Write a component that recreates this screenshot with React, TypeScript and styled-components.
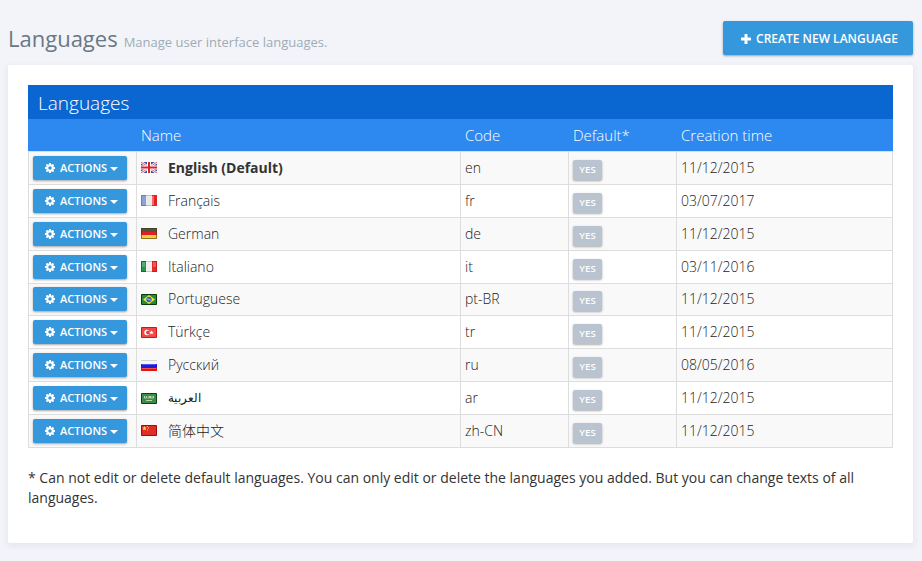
import React from "react";
import styled, { createGlobalStyle } from "styled-components";

const GlobalStyle = createGlobalStyle`
  * { box-sizing: border-box; }
  body {
    margin: 0;
    background: #f3f4f9;
    color: #333;
    font: 400 14px/20px "Open Sans", "Noto Sans CJK SC", sans-serif;
  }
`;

const Page = styled.main`
  width: 922px;
  height: 561px;
  padding: 21px 9px 0 8px;
  overflow: hidden;
`;

const PageHead = styled.header`
  display: flex;
  justify-content: space-between;
  height: 44px;
`;

const Title = styled.h1`
  margin: 0;
  font-size: 22px;
  line-height: 34px;
  font-weight: 400;
  color: #697882;
  white-space: nowrap;
`;

const Subtitle = styled.small`
  margin-left: 6px;
  font-size: 13px;
  color: #9eacb4;
`;

const Button = styled.button<{ $small?: boolean }>`
  display: flex;
  align-items: center;
  justify-content: center;
  width: ${(p) => (p.$small ? 94 : 190)}px;
  height: ${(p) => (p.$small ? 24 : 34)}px;
  padding: ${(p) => (p.$small ? "0 0 0 3px" : "1px 0 0 3px")};
  border: 0;
  border-radius: 2px;
  background: #3598dc;
  color: #fff;
  font: 600 ${(p) => (p.$small ? "11px" : "12px")} / 18px "Open Sans", sans-serif;
  text-transform: uppercase;
  white-space: nowrap;
  box-shadow: 0 1px 3px rgba(0, 0, 0, 0.15), 0 1px 2px rgba(0, 0, 0, 0.22);
`;

const Icon = styled.svg<{ $gap: number }>`
  flex: none;
  margin-right: ${(p) => p.$gap}px;
  fill: #fff;
`;

const Caret = styled.span`
  margin-left: 3px;
  margin-top: 2px;
  border: 4px solid transparent;
  border-top-color: #fff;
  border-bottom: 0;
`;

const Card = styled.section`
  height: 478px;
  padding: 20px;
  border-radius: 2px;
  background: #fff;
  box-shadow: 0 2px 6px 1px rgba(60, 70, 110, 0.08);
`;

const TableTitle = styled.h2`
  margin: 0;
  height: 34px;
  padding-left: 10px;
  background: #0a66d0;
  color: #fff;
  font-size: 19px;
  line-height: 36px;
  font-weight: 300;
`;

const Columns = styled.div`
  display: grid;
  grid-template-columns: 108px 324px 108px 108px 217px;
`;

const HeaderRow = styled(Columns)`
  height: 32px;
  background: #2d89f0;
  color: #fff;
  font-size: 15px;
  font-weight: 300;
  line-height: 33px;
`;

const HeaderCell = styled.div`
  padding-left: 5px;
`;

const Body = styled.div`
  border-top: 1px solid #ddd;
`;

const Row = styled(Columns)`
  height: 32.89px;
  border-right: 1px solid #ddd;
  border-bottom: 1px solid #ddd;
  background: #fff;
  &:nth-child(odd) {
    background: #f9f9f9;
  }
`;

const Cell = styled.div<{ $bold?: boolean }>`
  display: flex;
  align-items: center;
  padding-left: 4px;
  border-left: 1px solid #ddd;
  color: ${(p) => (p.$bold ? "#333" : "#1c1c1c")};
  font-weight: ${(p) => (p.$bold ? 700 : 300)};
`;

const Flag = styled.svg`
  flex: none;
  width: 16px;
  height: 11px;
  margin-right: 11px;
`;

const Badge = styled.span`
  width: 29px;
  height: 20px;
  margin-top: 4px;
  border-radius: 2px;
  background: #bac3d0;
  color: #fff;
  font-size: 9.6px;
  line-height: 19px;
  font-weight: 600;
  text-align: center;
  box-shadow: 0 1px 3px rgba(0, 0, 0, 0.15), 0 1px 2px rgba(0, 0, 0, 0.2);
`;

const Note = styled.p`
  margin: 20px 0 0;
`;

const flagArt: Record<string, React.ReactNode> = {
  en: (
    <>
      <path fill="#3b4f9e" d="M0 0h16v11H0z" />
      <path stroke="#f2f2f8" strokeWidth="2.6" d="m0 0 16 11M16 0 0 11" />
      <path stroke="#e0555f" strokeWidth=".9" d="m0 0 16 11M16 0 0 11" />
      <path fill="#fff" d="M6 0h4v11H6zM0 3.500h16v4H0z" />
      <path fill="#d8232f" d="M7 0h2v11H7zM0 4.500h16v2H0z" />
    </>
  ),
  fr: (
    <>
      <path fill="#e9e9e9" d="M0 0h16v11H0z" />
      <path fill="#8ba1da" d="M0 0h5v11H0z" />
      <path fill="#e5221c" d="M11 0h5v11h-5z" />
      <path fill="#fff" opacity=".35" d="M11 1h2v9h-2z" />
      <path fill="none" stroke="#31569e" opacity=".45" d="M5 .5H.5v10H5" />
      <path fill="none" stroke="#999" opacity=".5" d="M5 .5h6M5 10.500h6" />
    </>
  ),
  de: (
    <>
      <path fill="#525348" d="M0 0h16v4H0z" />
      <path fill="#e51f20" d="M0 4h16v3H0z" />
      <path fill="#f6cf3c" d="M0 7h16v4H0z" />
      <path fill="none" stroke="#49340c" opacity=".6" d="M.5.5h15v10H.5z" />
    </>
  ),
  it: (
    <>
      <path fill="#f0f0ec" d="M0 0h16v11H0z" />
      <path fill="#25964a" d="M0 0h5v11H0z" />
      <path fill="#e82c2c" d="M11 0h5v11h-5z" />
      <path fill="#fff" opacity=".2" d="M1 1h3v5H1zM12 1h3v5h-3z" />
      <path fill="none" stroke="#08722a" d="M5 .5H.5v10H5" />
      <path fill="none" stroke="#999" opacity=".5" d="M5 .5h6M5 10.500h6" />
      <path fill="none" stroke="#ba1313" opacity=".6" d="M11 .5h4.500v10H11" />
    </>
  ),
  "pt-BR": (
    <>
      <path fill="#248b36" stroke="#063d0b" d="M.5.5h15v10H.5z" />
      <path fill="#f4e43a" d="m8 1 6 4.500L8 10 2 5.500z" />
      <circle cx="8" cy="5.500" r="2.700" fill="#3462bd" />
      <path stroke="#b9d8ef" strokeWidth=".8" d="m6 4.700 4 1.500" />
    </>
  ),
  tr: (
    <>
      <path fill="#f34848" stroke="#e30d0d" d="M.5.5h15v10H.5z" />
      <circle cx="6" cy="5.500" r="2.700" fill="#fff" />
      <circle cx="7" cy="5.500" r="1.900" fill="#f03838" />
      <path fill="#fff" d="m10.500 3.500.6 1.300 1.500.1-1.100 1 .4 1.500-1.400-.8-1.400.8.4-1.500-1.100-1 1.500-.1z" />
    </>
  ),
  ru: (
    <>
      <path fill="#f5f5f5" d="M0 0h16v4H0z" />
      <path fill="#1c1ce0" d="M0 4h16v4H0z" />
      <path fill="#e4130f" d="M0 8h16v3H0z" />
      <path fill="#fff" opacity=".25" d="M1 4h14v1H1zM1 8h14v1H1z" />
      <path stroke="#b8b8b8" opacity=".55" d="M0 .5h16" />
    </>
  ),
  ar: (
    <>
      <path fill="#3d8b45" stroke="#09430d" d="M.5.5h15v10H.5z" />
      <path fill="none" stroke="#d8ebd8" strokeWidth=".9" opacity=".85" d="M3.500 3v2h2V3M6.500 5h2V3M9.500 3v2h3V3M8 3v1M11 3v1" />
      <path stroke="#d8ebd8" strokeWidth=".8" d="M5 7.500h6" />
    </>
  ),
  "zh-CN": (
    <>
      <path fill="#dd2e2a" stroke="#a70908" d="M.5.5h15v10H.5z" />
      <path fill="#fbd34b" d="m3.500 1 .7 1.500h1.600L4.600 3.600l.4 1.700-1.500-.9L2 5.300l.4-1.700L1.200 2.500h1.600zM6 1h1v1H6zM7 2.500h1v1H7zM6 4.500h1v1H6z" />
    </>
  ),
};

const languages = [
  ["English (Default)", "en", "11/12/2015"],
  ["Français", "fr", "03/07/2017"],
  ["German", "de", "11/12/2015"],
  ["Italiano", "it", "03/11/2016"],
  ["Portuguese", "pt-BR", "11/12/2015"],
  ["Türkçe", "tr", "11/12/2015"],
  ["Русский", "ru", "08/05/2016"],
  ["العربية", "ar", "11/12/2015"],
  ["简体中文", "zh-CN", "11/12/2015"],
];

const LanguageName = styled.span<{ $code: string }>`
  ${(p) => p.$code === "ar" && 'font-family: "DejaVu Sans", sans-serif; font-size: 11.6px;'}
`;

const Cog = () => (
  <Icon $gap={5} width="10" height="10" viewBox="0 128 1536 1536">
    <path d="M1024 896q0-106-75-181t-181-75-181 75-75 181 75 181 181 75 181-75 75-181zm512-109v222q0 12-8 23t-20 13l-185 28q-19 54-39 91 35 50 107 138 10 12 10 25t-9 23q-27 37-99 108t-94 71q-12 0-26-9l-138-108q-44 23-91 38-16 136-29 186-7 28-36 28h-222q-14 0-24.500-8.500t-11.500-21.500l-28-184q-49-16-90-37l-141 107q-10 9-25 9-14 0-25-11-126-114-165-168-7-10-7-23 0-12 8-23 15-21 51-66.500t54-70.500q-27-50-41-99l-183-27q-13-2-21-12.500t-8-23.500v-222q0-12 8-23t19-13l186-28q14-46 39-92-40-57-107-138-10-12-10-24 0-10 9-23 26-36 98.500-107.500t94.500-71.500q13 0 26 10l138 107q44-23 91-38 16-136 29-186 7-28 36-28h222q14 0 24.500 8.500t11.500 21.500l28 184q49 16 90 37l142-107q9-9 24-9 13 0 25 10 129 119 165 170 7 8 7 22 0 12-8 23-15 21-51 66.500t-54 70.500q26 50 41 98l183 28q13 2 21 12.500t8 23.500z" />
  </Icon>
);

export default function App() {
  return (
    <>
      <GlobalStyle />
      <Page>
        <PageHead>
          <Title>
            Languages<Subtitle>Manage user interface languages.</Subtitle>
          </Title>
          <Button>
            <Icon $gap={5} width="10" height="10" viewBox="0 0 10 10">
              <path d="M4 0h2q.5 0 .5.500v3h3q.5 0 .5.500v2q0 .5-.5.500h-3v3q0 .5-.5.500H4q-.5 0-.5-.5v-3h-3Q0 6.500 0 6V4q0-.5.500-.5h3v-3Q3.500 0 4 0z" />
            </Icon>
            Create new language
          </Button>
        </PageHead>
        <Card>
          <TableTitle>Languages</TableTitle>
          <HeaderRow>
            {["", "Name", "Code", "Default*", "Creation time"].map((label) => (
              <HeaderCell key={label}>{label}</HeaderCell>
            ))}
          </HeaderRow>
          <Body>
            {languages.map(([name, code, date]) => (
              <Row key={code}>
                <Cell>
                  <Button $small>
                    <Cog />
                    Actions
                    <Caret />
                  </Button>
                </Cell>
                <Cell $bold={code === "en"}>
                  <Flag viewBox="0 0 16 11">{flagArt[code]}</Flag>
                  <LanguageName $code={code}>{name}</LanguageName>
                </Cell>
                <Cell>{code}</Cell>
                <Cell>
                  <Badge>YES</Badge>
                </Cell>
                <Cell>{date}</Cell>
              </Row>
            ))}
          </Body>
          <Note>
            * Can not edit or delete default languages. You can only edit or delete the languages you
            added. But you can change texts of all languages.
          </Note>
        </Card>
      </Page>
    </>
  );
}
